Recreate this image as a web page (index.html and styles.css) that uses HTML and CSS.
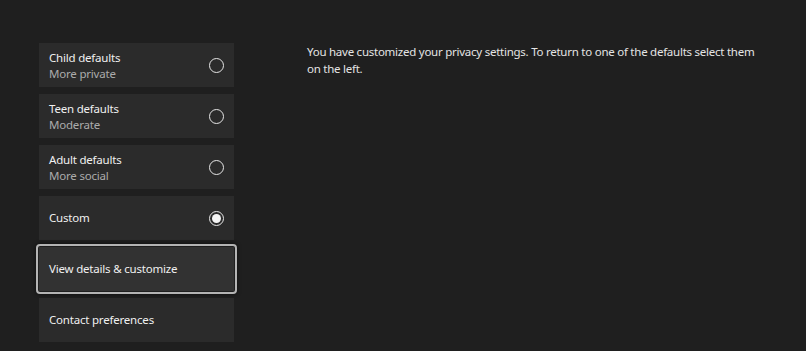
FILE: index.html
```html
<!DOCTYPE html>
<html lang="en">
<head>
    <meta charset="UTF-8">
    <meta name="viewport" content="width=device-width, initial-scale=1.0">
    <title>Privacy settings</title>
    <link rel="stylesheet" href="styles.css">
</head>
<body>
    <div class="page">
        <!-- presets -->
        <div class="menu">
            <div class="item">
                <div class="item-text">
                    <div class="item-title">Child defaults</div>
                    <div class="item-sub">More private</div>
                </div>
                <span class="radio"></span>
            </div>
            <div class="item">
                <div class="item-text">
                    <div class="item-title">Teen defaults</div>
                    <div class="item-sub">Moderate</div>
                </div>
                <span class="radio"></span>
            </div>
            <div class="item">
                <div class="item-text">
                    <div class="item-title">Adult defaults</div>
                    <div class="item-sub">More social</div>
                </div>
                <span class="radio"></span>
            </div>
            <div class="item">
                <div class="item-text">
                    <div class="item-title">Custom</div>
                </div>
                <span class="radio checked"></span>
            </div>
            <div class="item focused">
                <div class="item-text">
                    <div class="item-title">View details &amp; customize</div>
                </div>
            </div>
            <div class="item">
                <div class="item-text">
                    <div class="item-title">Contact preferences</div>
                </div>
            </div>
        </div>

        <!-- description -->
        <div class="info">
            <p>You have customized your privacy settings. To return to one of the defaults select them on the left.</p>
        </div>
    </div>
</body>
</html>
```

FILE: styles.css
```css
* {
    margin: 0;
    padding: 0;
    box-sizing: border-box;
}

body {
    font-family: 'Noto Sans', 'DejaVu Sans', sans-serif;
    background: #1f1f1f;
    color: #ececec;
    min-height: 100vh;
}

.page {
    display: flex;
    padding: 43px 0 0 39px;
}

.menu {
    width: 195px;
    display: flex;
    flex-direction: column;
    gap: 7px;
}

.item {
    height: 44px;
    background: #2b2b2b;
    display: flex;
    align-items: center;
    justify-content: space-between;
    padding: 0 10px;
    position: relative;
}

.item.focused {
    background: #323232;
}

.item.focused::after {
    content: '';
    position: absolute;
    inset: -3px;
    border: 2px solid #b4b4b4;
    border-radius: 4px;
    box-shadow: 0 0 4px rgba(0, 0, 0, 0.6);
}

.item-title {
    font-size: 11.5px;
    letter-spacing: -0.2px;
    line-height: 16px;
    color: #f0f0f0;
}

.item-sub {
    font-size: 11.5px;
    letter-spacing: -0.2px;
    line-height: 15px;
    color: #ababab;
}

.radio {
    width: 15px;
    height: 15px;
    border: 1.5px solid #e6e6e6;
    border-radius: 50%;
    display: flex;
    align-items: center;
    justify-content: center;
}

.radio.checked::before {
    content: '';
    width: 9px;
    height: 9px;
    border-radius: 50%;
    background: #f4f4f4;
}

.info {
    margin-left: 73px;
    width: 450px;
}

.info p {
    font-size: 11.5px;
    letter-spacing: -0.25px;
    line-height: 17px;
    color: #e4e4e4;
}
```
